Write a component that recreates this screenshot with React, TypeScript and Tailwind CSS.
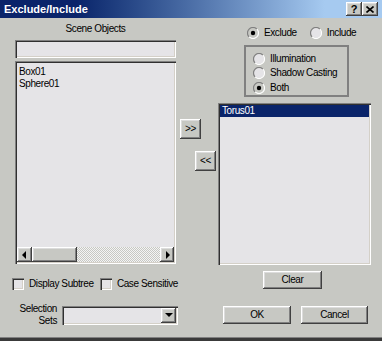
import type { ReactNode } from 'react';

const sunken =
  'shadow-[inset_1px_1px_0_#808080,inset_2px_2px_0_#303030,inset_-1px_-1px_0_#ffffff,inset_-2px_-2px_0_#d4d0c8]';
const raised =
  'shadow-[inset_-1px_-1px_0_#404040,inset_1px_1px_0_#ffffff,inset_-2px_-2px_0_#808080,inset_2px_2px_0_#dcdcdc]';

function Btn({ className = '', children }: { className?: string; children?: ReactNode }) {
  return (
    <div className={`flex shrink-0 items-center justify-center bg-[#c7c8c3] ${raised} ${className}`}>
      {children}
    </div>
  );
}

function Radio({ checked = false }: { checked?: boolean }) {
  return (
    <svg width="12" height="12" viewBox="0 0 12 12" className="shrink-0">
      <circle cx="6" cy="6" r="5" fill={checked ? '#c7c8c3' : '#e5e4e7'} />
      <path d="M2.1 9.9 A5.5 5.5 0 0 1 9.9 2.1" stroke="#808080" strokeWidth="1.2" fill="none" />
      <path d="M9.9 2.1 A5.5 5.5 0 0 1 2.1 9.9" stroke="#ffffff" strokeWidth="1.2" fill="none" />
      {checked && <circle cx="6" cy="6" r="2.2" fill="#000000" />}
    </svg>
  );
}

function Check() {
  return <div className={`h-[12px] w-[12px] shrink-0 bg-[#e5e4e7] ${sunken}`} />;
}

function Arrow({ dir }: { dir: 'left' | 'right' | 'down' }) {
  const pts = dir === 'left' ? '5,1 5,9 1,5' : dir === 'right' ? '2,1 2,9 6,5' : '1,3 9,3 5,7';
  return (
    <svg width={dir === 'down' ? 10 : 7} height="10" viewBox={dir === 'down' ? '0 0 10 10' : '0 0 7 10'}>
      <polygon points={pts} fill="#000000" />
    </svg>
  );
}

function RadioRow({ label, checked }: { label: string; checked?: boolean }) {
  return (
    <div className="flex h-[15px] items-center gap-[5px] whitespace-nowrap">
      <Radio checked={checked} />
      <span>{label}</span>
    </div>
  );
}

export default function App() {
  return (
    <div className="flex h-[341px] w-[382px] flex-col overflow-hidden bg-[#c7c8c3] font-['Liberation_Sans',Arial,sans-serif] text-[10px] leading-[12px] tracking-[-0.4px] text-black">
      {/* title bar */}
      <div className="flex h-[18px] shrink-0 items-center justify-between bg-linear-to-r from-[#0a246a] from-20% to-[#a6caf0] to-85% pl-[4px] pr-[4px]">
        <span className="text-[11px] font-bold tracking-normal text-white">Exclude/Include</span>
        <div className="flex">
          <Btn className="h-[14px] w-[16px] text-[11px] font-bold">?</Btn>
          <Btn className="h-[14px] w-[16px]">
            <svg width="8" height="7" viewBox="0 0 8 7">
              <path d="M0.5 0.5 L7.5 6.5 M7.5 0.5 L0.5 6.5" stroke="#000" strokeWidth="1.6" />
            </svg>
          </Btn>
        </div>
      </div>

      <div className="flex flex-1">
        {/* left column */}
        <div className="flex w-[178px] shrink-0 flex-col">
          <div className="ml-[15px] mt-[5px] w-[161px] text-center">Scene Objects</div>
          <div className={`ml-[15px] mt-[5px] h-[18px] w-[161px] bg-[#e5e4e7] ${sunken}`} />
          <div className={`ml-[15px] mt-[3px] flex h-[203px] w-[161px] flex-col bg-[#e5e4e7] p-[2px] ${sunken}`}>
            <div className="flex-1 pl-[2px] pt-[3px]">
              <div>Box01</div>
              <div>Sphere01</div>
            </div>
            <div className="flex h-[15px]">
              <Btn className="h-[15px] w-[15px]">
                <Arrow dir="left" />
              </Btn>
              <Btn className="h-[15px] w-[45px]" />
              <div className="h-[15px] flex-1 bg-[repeating-conic-gradient(#f4f4f4_0_25%,#c7c8c3_0_50%)] bg-[length:2px_2px]" />
              <Btn className="h-[15px] w-[14px]">
                <Arrow dir="right" />
              </Btn>
            </div>
          </div>
          <div className="mt-[14px] flex h-[12px] items-center whitespace-nowrap">
            <div className="ml-[12px]">
              <Check />
            </div>
            <span className="ml-[5px] w-[80px]">Display Subtree</span>
            <Check />
            <span className="ml-[5px]">Case Sensitive</span>
          </div>
          <div className="mt-[13px] flex items-center">
            <div className="w-[57px] text-right leading-[12px]">
              <div>Selection</div>
              <div>Sets</div>
            </div>
            <div className={`ml-[5px] flex h-[19px] w-[116px] justify-end bg-[#e5e4e7] p-[2px] ${sunken}`}>
              <Btn className="h-[15px] w-[15px]">
                <Arrow dir="down" />
              </Btn>
            </div>
          </div>
        </div>

        {/* center buttons */}
        <div className="flex w-[40px] shrink-0 flex-col">
          <Btn className="ml-[2px] mt-[101px] h-[20px] w-[21px]">&gt;&gt;</Btn>
          <Btn className="ml-[17px] mt-[12px] h-[20px] w-[21px]">&lt;&lt;</Btn>
        </div>

        {/* right column */}
        <div className="flex w-[164px] shrink-0 flex-col">
          <div className="mt-[9px] flex h-[12px] items-center whitespace-nowrap">
            <div className="ml-[29px] flex items-center gap-[5px]">
              <Radio checked />
              <span>Exclude</span>
            </div>
            <div className="ml-[13px] flex items-center gap-[5px]">
              <Radio />
              <span>Include</span>
            </div>
          </div>
          <div className="ml-[26px] mt-[6px] flex h-[52px] w-[105px] flex-col border-2 border-[#808080] pl-[7px] pt-[5px]">
            <RadioRow label="Illumination" />
            <RadioRow label="Shadow Casting" />
            <RadioRow label="Both" checked />
          </div>
          <div className={`mt-[6px] h-[162px] w-[153px] bg-[#e5e4e7] p-[2px] ${sunken}`}>
            <div className="h-[12px] bg-[#0a246a] pl-[2px] text-white">Torus01</div>
          </div>
          <Btn className="ml-[45px] mt-[6px] h-[18px] w-[59px]">Clear</Btn>
          <div className="mt-[17px] flex gap-[10px]">
            <Btn className="ml-[5px] h-[18px] w-[68px]">OK</Btn>
            <Btn className="h-[18px] w-[67px]">Cancel</Btn>
          </div>
        </div>
      </div>

      <div className="h-[1px] shrink-0 bg-[#808080]" />
      <div className="h-[3px] shrink-0 bg-[#3a3a3a]" />
    </div>
  );
}
